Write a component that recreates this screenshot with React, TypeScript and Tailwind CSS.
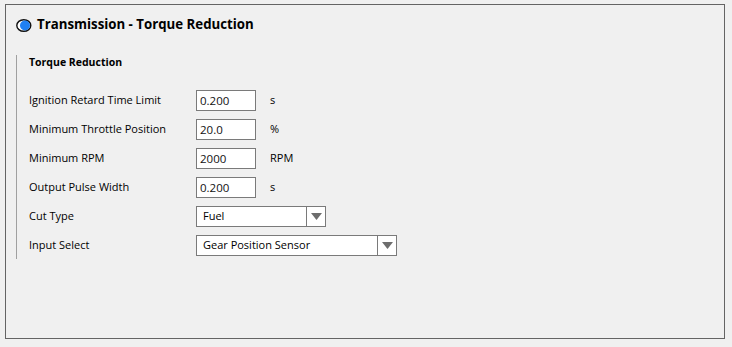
const font = { fontFamily: '"Segoe UI", "Open Sans", "Noto Sans", sans-serif' };

const rows: { label: string; value: string; unit?: string; kind: "input" | "select"; width?: number }[] = [
  { label: "Ignition Retard Time Limit", value: "0.200", unit: "s", kind: "input" },
  { label: "Minimum Throttle Position", value: "20.0", unit: "%", kind: "input" },
  { label: "Minimum RPM", value: "2000", unit: "RPM", kind: "input" },
  { label: "Output Pulse Width", value: "0.200", unit: "s", kind: "input" },
  { label: "Cut Type", value: "Fuel", kind: "select", width: 130 },
  { label: "Input Select", value: "Gear Position Sensor", kind: "select", width: 201 },
];

function Select({ value, width }: { value: string; width: number }) {
  return (
    <div
      className="flex h-[21px] border border-[#7a7a7a] bg-white"
      style={{ width }}
    >
      <div className="flex flex-1 items-center pl-[6px] text-[11px] text-[#000]">{value}</div>
      <div className="flex w-[19px] items-center justify-center border-l border-[#7a7a7a]">
        <svg width="11" height="7" viewBox="0 0 11 7">
          <path d="M0 0 H11 L5.5 7 Z" fill="#6d6d6d" />
        </svg>
      </div>
    </div>
  );
}

export default function App() {
  return (
    <div className="h-[347px] w-[732px] overflow-hidden bg-[#f0f0f0] pl-[5px] pt-[4px] text-[#000]" style={font}>
      <div className="h-[335px] w-[720px] border border-[#646464]">
        <div className="ml-[10px] mt-[10px] flex h-[20px] items-center gap-[5px]">
          <svg width="16" height="13" viewBox="0 0 16 13">
            <ellipse cx="7.8" cy="6.5" rx="7" ry="5.8" fill="#fff" stroke="#111" strokeWidth="1.4" />
            <circle cx="9" cy="6.5" r="5" fill="#1f80f2" />
          </svg>
          <span className="text-[13.25px] font-bold">Transmission - Torque Reduction</span>
        </div>

        <div className="ml-[10px] mt-[20px] h-[204px] border-l border-[#a0a0a0] pl-[12px]">
          <div className="h-[14px] text-[10.5px] leading-[14px] font-bold">Torque Reduction</div>
          <div className="mt-[17px] flex flex-col">
            {rows.map((r) => (
              <div key={r.label} className="flex h-[29px] items-center text-[11px]">
                <div className="w-[167px]">{r.label}</div>
                {r.kind === "input" ? (
                  <>
                    <div className="flex h-[21px] w-[60px] items-center border border-[#7a7a7a] bg-white pl-[3px] text-[11.5px] text-[#111]">
                      {r.value}
                    </div>
                    <div className="ml-[14px]">{r.unit}</div>
                  </>
                ) : (
                  <Select value={r.value} width={r.width ?? 130} />
                )}
              </div>
            ))}
          </div>
        </div>
      </div>
    </div>
  );
}
